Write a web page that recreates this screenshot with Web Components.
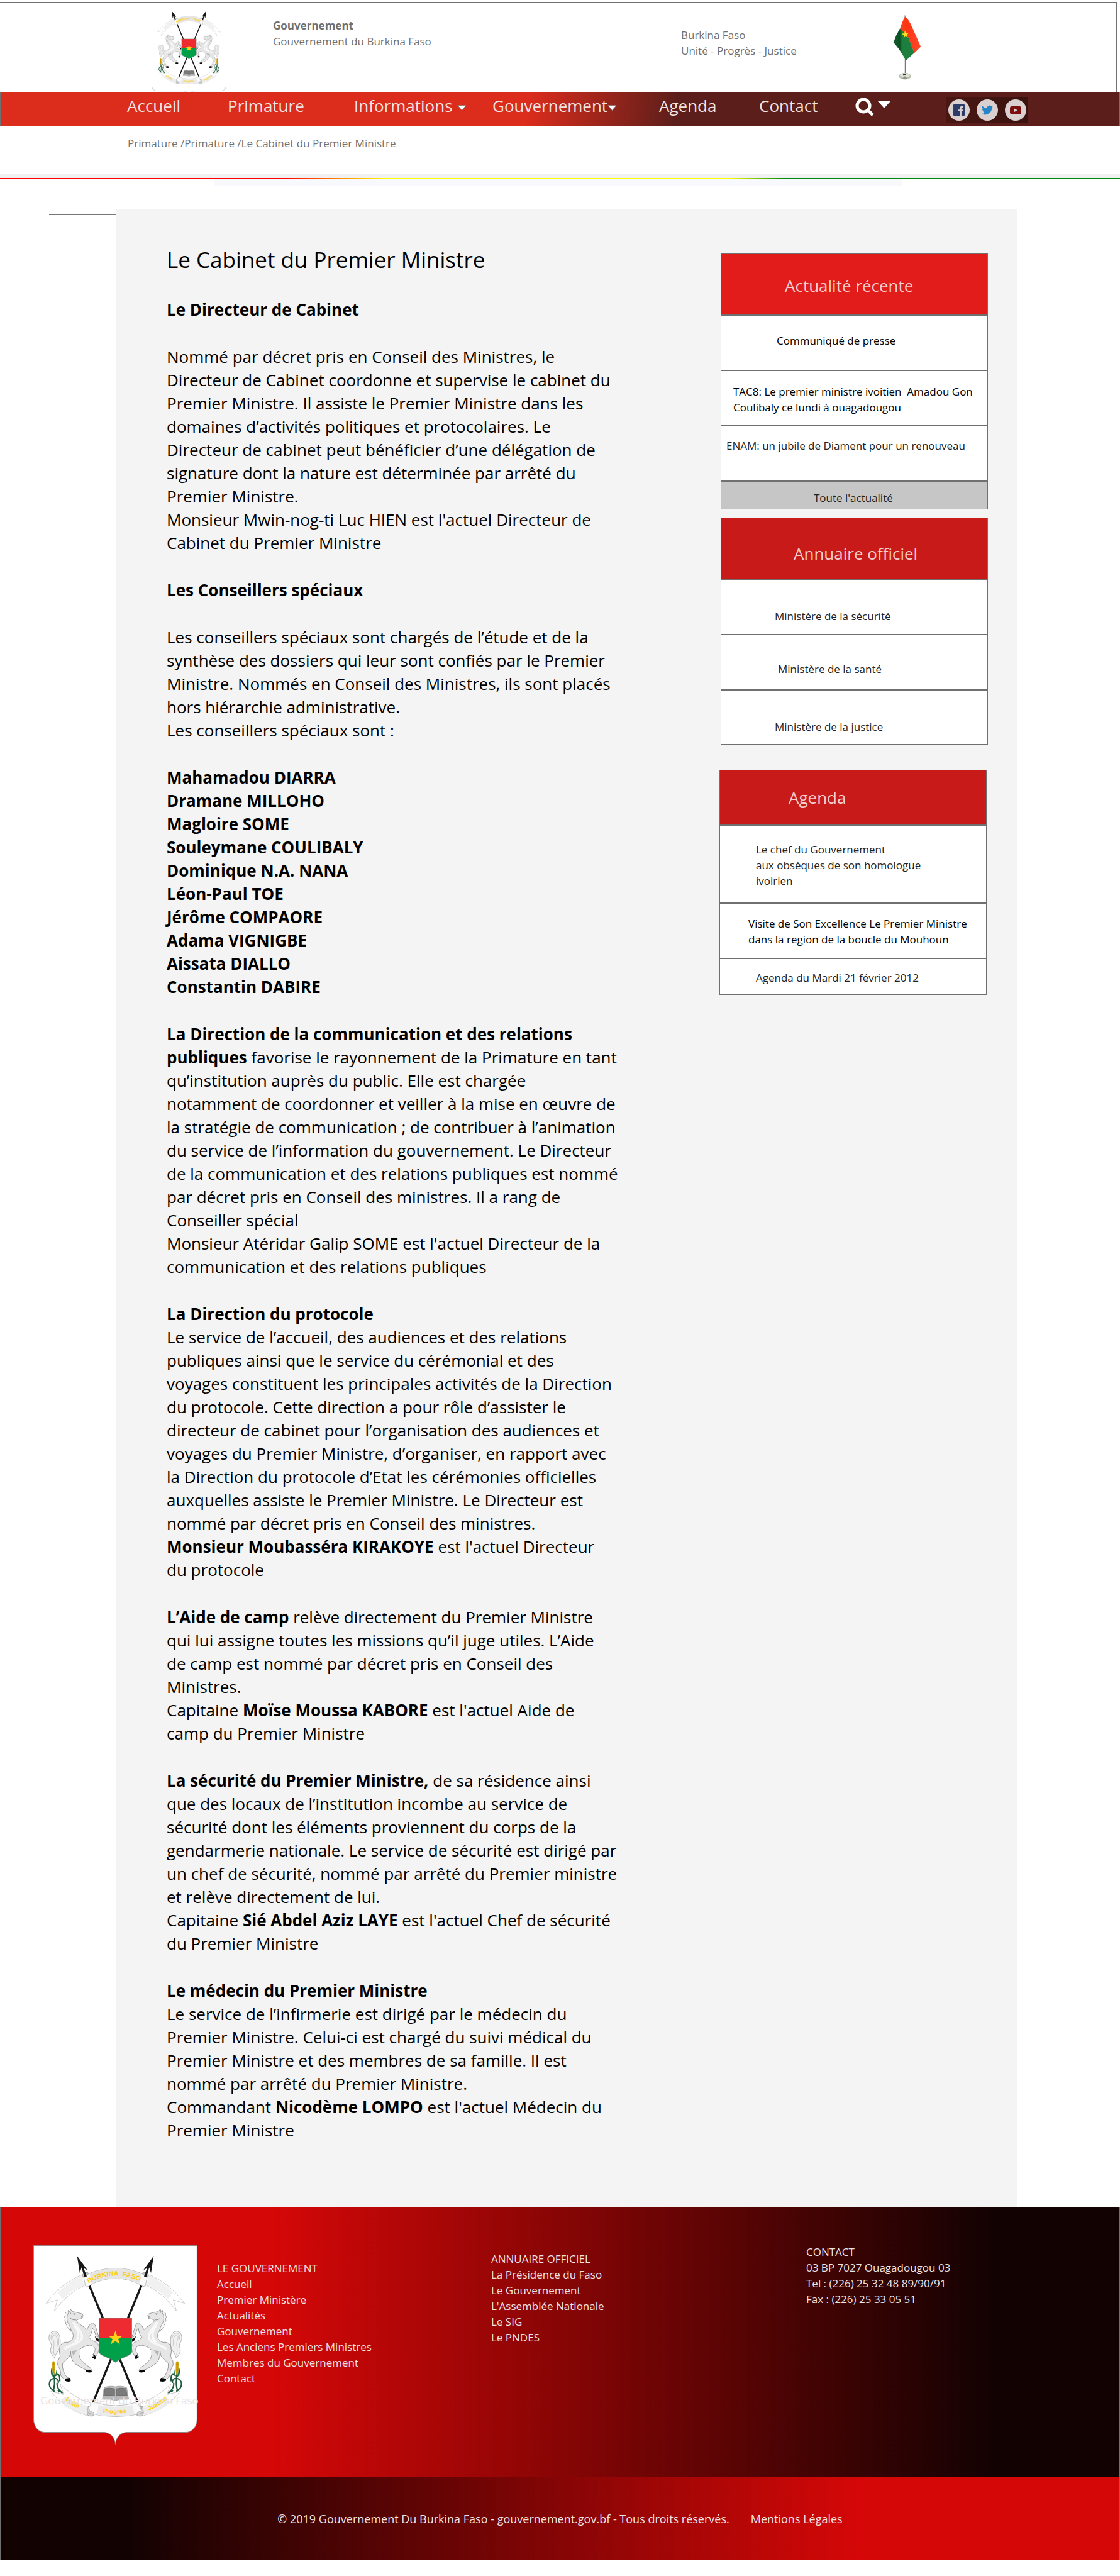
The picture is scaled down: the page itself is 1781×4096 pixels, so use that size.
<!DOCTYPE html>
<html lang="fr">
<head>
<meta charset="utf-8">
<title>Le Cabinet du Premier Ministre</title>
<style>
  body { margin: 0; background: #fff; font-family: "Open Sans", "Noto Sans", sans-serif; font-size: 17px; line-height: 25px; color: #000; }
</style>
</head>
<body>
<gov-page>
  <cabinet-article slot="article"></cabinet-article>

  <side-card slot="aside" style="--head-h:96px;--head-x:102px;--head-y:33px;--head-bg:#e11c1a">
    <span slot="title">Actualité récente</span>
    <side-row style="--h:86px;--x:88px;--y:27px">Communiqué de presse</side-row>
    <side-row style="--h:86px;--x:19px;--y:20px">TAC8: Le premier ministre ivoitien &nbsp;Amadou Gon<br>Coulibaly ce lundi à ouagadougou</side-row>
    <side-row style="--h:86px;--x:8px;--y:18px;--ink:#222">ENAM: un jubile de Diament pour un renouveau</side-row>
    <side-row style="--h:43px;--x:147px;--y:13px;--ink:#222;--bg:#c6c6c6">Toute l'actualité</side-row>
  </side-card>

  <side-card slot="aside" style="--head-h:96px;--head-x:116px;--head-y:39px;--gap:13px">
    <span slot="title">Annuaire officiel</span>
    <side-row style="--h:86px;--x:85px;--y:45px;--ink:#222">Ministère de la sécurité</side-row>
    <side-row style="--h:86px;--x:90px;--y:41px;--ink:#222">Ministère de la santé</side-row>
    <side-row style="--h:85px;--x:85px;--y:45px;--ink:#222">Ministère de la justice</side-row>
  </side-card>

  <side-card slot="aside" style="--head-h:86px;--head-x:110px;--head-y:26px;--gap:40px;--shift:2px">
    <span slot="title">Agenda</span>
    <side-row style="--h:122px;--x:57px;--y:25px;--ink:#222">Le chef du Gouvernement<br>aux obsèques de son homologue<br>ivoirien</side-row>
    <side-row style="--h:86px;--x:45px;--y:19px">Visite de Son Excellence Le Premier Ministre<br>dans la region de la boucle du Mouhoun</side-row>
    <side-row style="--h:56px;--x:57px;--y:17px;--ink:#222">Agenda du Mardi 21 février 2012</side-row>
  </side-card>
</gov-page>

<script>
function define(name, markup) {
  const template = document.createElement('template');
  template.innerHTML = markup;
  customElements.define(name, class extends HTMLElement {
    constructor() {
      super();
      this.attachShadow({ mode: 'open' }).append(template.content.cloneNode(true));
    }
  });
}

/* Left half of the coat of arms supporters; the right half is its mirror. */
const supporter = `
  <path d="M187 575C192 530 185 500 160 498C138 498 128 515 131 540C134 556 146 562 143 578C134 592 136 612 160 636C163 610 182 605 187 575Z" fill="#f1f1f1" stroke="#999" stroke-width="2.5"/>
  <path d="M180 570C184 535 178 508 158 508C142 510 138 525 143 540M172 580C178 545 172 518 157 518C147 522 148 532 154 545C162 570 148 590 158 620" fill="none" stroke="#aaa" stroke-width="2"/>
  <path d="M232 395L230 390Q236 396 238 398L241 385L252 398Q268 400 280 403L300 409Q308 416 305 422L296 424L305 428Q302 436 290 435Q278 437 272 442C280 462 312 474 325 491Q333 470 348 457Q362 452 369 470L378 500L388 530L374 524L360 490L354 482Q350 515 335 530Q350 548 374 556Q390 566 388 590Q384 612 372 626L356 618Q370 605 368 588Q364 574 340 570Q305 574 285 596Q282 620 291 640Q312 668 340 684L352 700L322 697Q300 688 262 664Q248 648 244 628L242 603Q240 625 232 634Q212 650 201 664Q197 680 206 705Q214 730 226 736L240 742L214 745Q190 736 190 716Q192 700 175 672Q172 650 188 628Q180 600 188 572Q200 552 228 555Q250 548 254 530C262 505 232 480 218 455Q205 420 232 395Z" fill="#e6e6e6" stroke="#909090" stroke-width="3"/>
  <path d="M255 450C270 480 300 495 300 530C298 560 240 565 210 590M262 470C290 500 285 540 262 555" fill="none" stroke="#f8f8f8" stroke-width="12"/>
  <path d="M246 600L276 596Q266 606 256 624Z" fill="#b5b5b5"/>
  <path d="M222 400Q210 404 214 416Q206 426 214 434Q208 446 217 452Q212 462 222 468Q220 478 230 482Q230 492 238 492L244 500Q244 478 232 462Q214 434 232 400Z" fill="#f5f5f5" stroke="#888" stroke-width="2.5"/>
  <path d="M238 398L243 408M238 428Q248 442 270 440M254 409L266 408L262 413Z" fill="none" stroke="#777" stroke-width="2.5"/>
  <path d="M366 524Q376 534 386 538V553Q374 550 371 538Z M358 616L372 628Q374 640 366 642L353 634L352 626L359 629Z M322 697L344 696Q354 704 350 709Q334 713 320 707Z M212 742L236 738Q246 748 241 756Q224 760 211 752Z" fill="#080808"/>
  <path d="M150 806Q165 780 155 716M158 800Q134 800 132 770Q134 744 158 740Q182 742 178 764M162 728Q188 704 186 756M146 690Q138 720 156 732M172 764Q168 790 200 818M156 800V814M176 800L184 812" fill="none" stroke="#1e5a3c" stroke-width="7"/>
  <path d="M147 660Q154 644 161 660L162 700Q158 722 156 726Q150 716 148 700Z" fill="#d9a90c"/>
  <path d="M151 656V712M156 656V716M148 668H161M148 682H161M148 696H161" stroke="#a87c06" stroke-width="1.5"/>
  <path d="M145 686L152 726L158 740L142 722ZM172 682L164 722L156 738L172 716Z" fill="#2d7a4f"/>
  <path d="M330 198Q210 232 116 355L174 337L158 395Q225 300 322 258Z" fill="#fff" stroke="#bbb" stroke-width="2.5"/>
  <path d="M302 209Q235 238 176 300L202 332Q250 285 310 262Z" fill="#f1f1f1"/>
  <path d="M330 196Q300 196 302 216L318 228L336 206Z" fill="#c4c4c4" stroke="#999" stroke-width="2"/>
  <path d="M140 808Q205 900 335 935L345 868Q255 840 186 768L207 824Z" fill="#fff" stroke="#bbb" stroke-width="2.5"/>
  <path d="M212 832Q262 868 330 882L326 930Q250 912 188 862Z" fill="#eee"/>
  <path d="M334 885Q360 880 362 930Q350 940 332 932Q322 915 334 910Z" fill="#d2d2d2" stroke="#999" stroke-width="2.5"/>`;
const spear = `<path d="M316 210L586 862" stroke="#161616" stroke-width="11"/>`;
const spearHead = `<path d="M275 111L328 184L309 174L325 216L313 222L298 170L289 199Z" fill="#161616"/>`;

define('faso-emblem', `
<style>
  :host { display: block; }
  svg { display: block; width: 100%; height: auto; }
  text { font-family: "Liberation Sans", sans-serif; font-weight: bold; fill: #fbcf17; }
</style>
<svg viewBox="50 56 844 1026" role="img" aria-label="Armoiries du Burkina Faso">
  <defs>
    <path id="arc" d="M334 252Q405 213 472 213Q545 213 616 252"/>
    <path id="mid" d="M408 918Q472 926 540 916"/>
    <path id="left" d="M214 852Q250 884 300 902"/>
    <path id="right" d="M644 906Q696 884 736 850"/>
    <clipPath id="shield"><path d="M388 431H556V606Q553 618 528 627Q498 638 472 658Q446 638 416 627Q391 618 388 606Z"/></clipPath>
  </defs>
  <path d="M51.500 58H892V950C892 994 862 1018 835 1018H530C492 1021 474 1050 472 1080C470 1050 452 1021 414 1018H108C81 1018 51.500 994 51.500 950Z" fill="#fff" stroke="#868686" stroke-width="3"/>
  <g>${supporter}</g>
  <g transform="translate(944 0) scale(-1 1)">${supporter}</g>
  ${spear}<g transform="translate(944 0) scale(-1 1)">${spear}</g>
  <path d="M308 216Q385 174 472 174Q560 174 636 216L626 266Q615 272 605 262Q545 227 472 227Q400 227 342 262Q330 274 318 266Z" fill="#fbfbfb" stroke="#aaa" stroke-width="2.5"/>
  <path d="M340 203Q405 175 472 175Q540 175 604 203L594 256Q540 226 472 226Q405 226 350 256Z" fill="#e6e6e6"/>
  ${spearHead}<g transform="translate(944 0) scale(-1 1)">${spearHead}</g>
  <path d="M405 848L414 788Q445 776 472 784Q500 776 530 788L540 848Q500 846 472 854Q440 846 405 848Z" fill="#b9b9b9" stroke="#999" stroke-width="2.500"/>
  <path d="M418 793Q445 788 468 794V832Q445 824 411 831ZM526 793Q500 788 476 794V832Q500 824 533 831Z" fill="#7b7b7b" stroke="#555" stroke-width="2"/>
  <path d="M358 862Q472 900 586 862L612 920Q472 955 338 920Q328 908 334 890Z" fill="#fafafa" stroke="#aaa" stroke-width="2.5"/>
  <path d="M385 878Q472 894 560 878L570 926Q472 946 378 928Z" fill="#ebebeb"/>
  <path d="M332 882L328 912Q330 922 362 926Q360 912 340 908ZM612 882L616 912Q614 922 582 926Q584 912 604 908Z" fill="#d6d6d6" stroke="#999" stroke-width="2"/>
  <g clip-path="url(#shield)">
    <path d="M388 431H556V534H388Z" fill="#ef2b32"/><path d="M388 534H556V660H388Z" fill="#00a04a"/>
  </g>
  <path d="M388 431H556V606Q553 618 528 627Q498 638 472 658Q446 638 416 627Q391 618 388 606Z" fill="none" stroke="#777" stroke-width="3"/>
  <path d="M472 495L481 522H509L487 539L495 565L472 549L449 565L457 539L435 522H463Z" fill="#fcd116"/>
  <text font-size="35"><textPath href="#arc">BURKINA &#160;FASO</textPath></text>
  <text font-size="32"><textPath href="#mid">Progrès</textPath></text>
  <text font-size="32"><textPath href="#left">Unité</textPath></text>
  <text font-size="32"><textPath href="#right">Justice</textPath></text>
</svg>`);

define('desk-flag', `
<style>:host { display: block; } svg { display: block; width: 45px; height: 103px; }</style>
<svg viewBox="270 74 144 332" role="img" aria-label="Drapeau du Burkina Faso">
  <defs>
    <linearGradient id="g"><stop offset="0" stop-color="#14602a"/><stop offset=".3" stop-color="#0c4f24"/><stop offset=".42" stop-color="#1d7f3e"/><stop offset="1" stop-color="#1d7f3e"/></linearGradient>
    <linearGradient id="r"><stop offset="0" stop-color="#f24422"/><stop offset=".3" stop-color="#ff3411"/><stop offset="1" stop-color="#ff4a2c"/></linearGradient>
  </defs>
  <path d="M329 76H333V90H329ZM330 300H334V374H330Z" fill="#777"/>
  <ellipse cx="331" cy="387" rx="32" ry="17" fill="#b9bdac"/>
  <ellipse cx="331" cy="383" rx="26" ry="11" fill="#dfe2d6"/>
  <path d="M321 376H324V384H321ZM327 376H337V383H327Z" fill="#333"/><path d="M318 400L328 388H334L342 400Z" fill="#8f9482"/>
  <path d="M331 82Q350 94 368 136L412 236L379 268L346 185L305 145Q314 112 331 82Z" fill="url(#r)"/>
  <path d="M305 143L346 183L379 267L335 308Q310 255 272 214Q284 176 305 143Z" fill="url(#g)"/>
  <path d="M330 152L336 166L349 166L340 176L346 189L333 183L324 192L325 177L313 169L328 168Z" fill="#f4e51c"/>
</svg>`);

define('gov-header', `
<style>
  :host { display: grid; grid-template-columns: 241fr 193fr 649fr 337fr 355fr; align-items: start; height: 142px; margin: 3px 5px 0 0; border-top: 1px solid #707070; border-right: 1px solid #707070; color: #707070; }
  faso-emblem { grid-column: 2; width: 119px; height: 137px; margin-top: 5px; overflow: hidden; }
  .name { margin-top: 24px; }
  .motto { margin-top: 39px; }
  desk-flag { margin-top: 20px; }
  p { margin: 0; white-space: nowrap; }
</style>
<faso-emblem></faso-emblem>
<div class="name"><p><b>Gouvernement</b></p><p>Gouvernement du Burkina Faso</p></div>
<div class="motto"><p>Burkina Faso</p><p>Unité - Progrès - Justice</p></div>
<desk-flag></desk-flag>`);

define('menu-caret', `
<style>:host { display: block; } svg { display: block; }</style>
<svg width="15" height="9" viewBox="0 0 15 9"><path d="M1 .8H14L7.500 8.500Z" fill="#fff" stroke="#8a8080" stroke-width="1"/></svg>`);

define('social-link', `
<style>
  :host { display: block; }
  a { display: flex; align-items: center; justify-content: center; width: 34px; height: 34px; border-radius: 50%; background: #dad0d0; }
  svg { display: none; width: 18px; height: 18px; }
  :host([kind="facebook"]) .facebook, :host([kind="twitter"]) .twitter, :host([kind="youtube"]) .youtube { display: block; }
</style>
<a href="#">
  <svg class="facebook" viewBox="0 0 18 18"><rect width="18" height="18" rx="1" fill="#2b3c68"/><path d="M10 18V11H7.500V8.200H10V6.500C10 4 11.500 2.800 13.600 2.800H15.600V5.400H14.200C13.200 5.400 12.900 5.900 12.900 6.800V8.200H15.500L15.100 11H12.900V18Z" fill="#dad0d0"/></svg>
  <svg class="twitter" viewBox="0 0 24 24"><path fill="#2585c6" d="M24 4.600a10 10 0 0 1-2.800.8 5 5 0 0 0 2.200-2.700 10 10 0 0 1-3.100 1.200 4.900 4.900 0 0 0-8.400 4.500A14 14 0 0 1 1.700 3.200a4.900 4.900 0 0 0 1.500 6.500 4.900 4.900 0 0 1-2.200-.6 4.900 4.900 0 0 0 3.900 4.900 5 5 0 0 1-2.200.1 4.900 4.900 0 0 0 4.600 3.400A9.900 9.900 0 0 1 0 19.500 14 14 0 0 0 21.500 7.100 10 10 0 0 0 24 4.600z"/></svg>
  <svg class="youtube" viewBox="0 0 18 18"><rect y="3" width="18" height="12.500" rx="3" fill="#7a0f0e"/><path d="M7 6.500L12 9.200L7 12Z" fill="#dad0d0"/></svg>
</a>`);

define('gov-nav', `
<style>
  :host { display: block; }
  nav { box-sizing: border-box; display: grid; grid-template-columns: 201fr 160fr 201fr 220fr 265fr 159fr 148fr 150fr 275fr; align-items: start; height: 55px; border: 1px solid #707070; background: linear-gradient(97deg, #dc2c1c 47%, #5b1e1a 60.500%); font-size: 26px; line-height: 37px; }
  a.item { display: flex; align-items: center; margin-top: 3px; color: #f0e4e3; text-decoration: none; white-space: nowrap; }
  a.item menu-caret { margin-top: 6px; }
  .spaced { gap: 7px; }
  a:first-child { grid-column: 2; }
  button { display: flex; align-items: flex-start; gap: 6px; width: 72px; height: 53px; margin: 0; margin-top: -1px; padding: 10px 5px 0; border: 0; background: #5b1e1a; }
  .social { display: flex; align-items: center; justify-content: center; gap: 11px; width: 130px; height: 42px; margin-top: 7px; background: linear-gradient(90deg, #4a1713, #3a120f); }
</style>
<nav aria-label="Menu principal">
  <a class="item" href="#">Accueil</a>
  <a class="item" href="#">Primature</a>
  <a class="item spaced" href="#">Informations<menu-caret></menu-caret></a>
  <a class="item" href="#">Gouvernement<menu-caret></menu-caret></a>
  <a class="item" href="#">Agenda</a>
  <a class="item" href="#">Contact</a>
  <button type="button" aria-label="Rechercher">
    <svg width="30" height="29" viewBox="0 0 30 29"><ellipse cx="13" cy="12" rx="10" ry="10" fill="none" stroke="#fff" stroke-width="5"/><path d="M20 19L28 27" stroke="#fff" stroke-width="5"/></svg>
    <svg width="20" height="16" viewBox="0 0 20 16"><path d="M0 5H20L10 16Z" fill="#fff"/></svg>
  </button>
  <div class="social">
    <social-link kind="facebook"></social-link><social-link kind="twitter"></social-link><social-link kind="youtube"></social-link>
  </div>
</nav>`);

define('gov-breadcrumb', `
<style>
  :host { display: block; color: #707070; }
  .trail { padding: 14px 203px 36px; }
  a { color: inherit; text-decoration: none; }
  .band { height: 7px; background: #f1f1f1; }
  .tricolor { height: 2px; background: linear-gradient(90deg, #f00 25.500%, #ff0 34.600%, #ff0 65%, #008a0e 70%); }
  .pale { height: 11px; margin: 0 346px 36px 340px; background: #f7f9fc; }
</style>
<div class="trail"><a href="#">Primature</a> /<a href="#">Primature</a> /Le Cabinet du Premier Ministre</div>
<div class="band"></div><div class="tricolor"></div><div class="pale"></div>`);

define('side-row', `
<style>
  :host { box-sizing: border-box; display: block; min-height: calc(var(--h) + 2px); padding: var(--y) 0 0 var(--x); border-top: 2px solid #707070; background: var(--bg, #fff); }
  a { color: var(--ink, #000); text-decoration: none; white-space: nowrap; }
</style>
<a href="#"><slot></slot></a>`);

define('side-card', `
<style>
  :host { display: block; margin: var(--gap, 0) var(--shift, 0) 0 calc(0px - var(--shift, 0px)); border: 1px solid #707070; }
  h2 { box-sizing: border-box; height: var(--head-h); margin: 0; padding: calc(var(--head-y) - 1px) 0 0 calc(var(--head-x) - 1px); background: var(--head-bg, #c81a19); color: #f4cfce; font-size: 26px; line-height: 37px; font-weight: 400; }
</style>
<h2><slot name="title"></slot></h2><slot></slot>`);

define('cabinet-article', `
<style>
  :host { display: block; font-size: 26px; line-height: 37px; white-space: nowrap; }
  h1 { margin: 0 0 37px; font-size: 35px; line-height: 48px; font-weight: 400; }
  h2 { margin: 0 0 38px; font-size: inherit; line-height: inherit; }
  p { margin: 0 0 38px; }
  p:last-child { margin: 0; }
</style>
<h1>Le Cabinet du Premier Ministre</h1>
<h2>Le Directeur de Cabinet</h2>
<p>Nommé par décret pris en Conseil des Ministres, le<br>Directeur de Cabinet coordonne et supervise le cabinet du<br>Premier Ministre. Il assiste le Premier Ministre dans les<br>domaines d’activités politiques et protocolaires. Le<br>Directeur de cabinet peut bénéficier d’une délégation de<br>signature dont la nature est déterminée par arrêté du<br>Premier Ministre.<br>Monsieur Mwin-nog-ti Luc HIEN est l'actuel Directeur de<br>Cabinet du Premier Ministre</p>
<h2>Les Conseillers spéciaux</h2>
<p>Les conseillers spéciaux sont chargés de l’étude et de la<br>synthèse des dossiers qui leur sont confiés par le Premier<br>Ministre. Nommés en Conseil des Ministres, ils sont placés<br>hors hiérarchie administrative.<br>Les conseillers spéciaux sont :</p>
<p><b>Mahamadou DIARRA<br>Dramane MILLOHO<br>Magloire SOME<br>Souleymane COULIBALY<br>Dominique N.A. NANA<br>Léon-Paul TOE<br>Jérôme COMPAORE<br>Adama VIGNIGBE<br>Aissata DIALLO<br>Constantin DABIRE</b></p>
<p><b>La Direction de la communication et des relations<br>publiques</b> favorise le rayonnement de la Primature en tant<br>qu’institution auprès du public. Elle est chargée<br>notamment de coordonner et veiller à la mise en œuvre de<br>la stratégie de communication ; de contribuer à l’animation<br>du service de l’information du gouvernement. Le Directeur<br>de la communication et des relations publiques est nommé<br>par décret pris en Conseil des ministres. Il a rang de<br>Conseiller spécial<br>Monsieur Atéridar Galip SOME est l'actuel Directeur de la<br>communication et des relations publiques</p>
<p><b>La Direction du protocole</b><br>Le service de l’accueil, des audiences et des relations<br>publiques ainsi que le service du cérémonial et des<br>voyages constituent les principales activités de la Direction<br>du protocole. Cette direction a pour rôle d’assister le<br>directeur de cabinet pour l’organisation des audiences et<br>voyages du Premier Ministre, d’organiser, en rapport avec<br>la Direction du protocole d’Etat les cérémonies officielles<br>auxquelles assiste le Premier Ministre. Le Directeur est<br>nommé par décret pris en Conseil des ministres.<br><b>Monsieur Moubasséra KIRAKOYE</b> est l'actuel Directeur<br>du protocole</p>
<p><b>L’Aide de camp</b> relève directement du Premier Ministre<br>qui lui assigne toutes les missions qu’il juge utiles. L’Aide<br>de camp est nommé par décret pris en Conseil des<br>Ministres.<br>Capitaine <b>Moïse Moussa KABORE</b> est l'actuel Aide de<br>camp du Premier Ministre</p>
<p><b>La sécurité du Premier Ministre,</b> de sa résidence ainsi<br>que des locaux de l’institution incombe au service de<br>sécurité dont les éléments proviennent du corps de la<br>gendarmerie nationale. Le service de sécurité est dirigé par<br>un chef de sécurité, nommé par arrêté du Premier ministre<br>et relève directement de lui.<br>Capitaine <b>Sié Abdel Aziz LAYE</b> est l'actuel Chef de sécurité<br>du Premier Ministre</p>
<p><b>Le médecin du Premier Ministre</b><br>Le service de l’infirmerie est dirigé par le médecin du<br>Premier Ministre. Celui-ci est chargé du suivi médical du<br>Premier Ministre et des membres de sa famille. Il est<br>nommé par arrêté du Premier Ministre.<br>Commandant <b>Nicodème LOMPO</b> est l'actuel Médecin du<br>Premier Ministre</p>`);

define('gov-footer', `
<style>
  :host { display: block; color: #eee3e3; }
  .top { box-sizing: border-box; display: grid; grid-template-columns: 52fr 292fr 436fr 501fr 498fr; align-items: start; min-height: 430px; border: 1px solid #707070; background: linear-gradient(90deg, #d60707 24%, #120202 89%); }
  .crest { grid-column: 2; position: relative; width: 261px; margin-top: 60px; }
  .crest p { position: absolute; left: 11px; top: 234px; margin: 0; white-space: nowrap; color: #e6e0e0; }
  .a { margin-top: 84px; } .b { margin-top: 69px; } .c { margin-top: 58px; }
  h3, p, ul { margin: 0; padding: 0; font-size: inherit; font-weight: 400; list-style: none; }
  a { color: inherit; text-decoration: none; }
  .bar { box-sizing: border-box; display: flex; justify-content: center; gap: 34px; height: 132px; padding-top: 54px; border: 1px solid #707070; border-top: 0; background: linear-gradient(90deg, #120202 11%, #d60707 77%); font-size: 18px; }
</style>
<div class="top">
  <div class="crest"><faso-emblem></faso-emblem><p>Gouvernement du Burkina Faso</p></div>
  <div class="a"><h3>LE GOUVERNEMENT</h3>
    <ul><li><a href="#">Accueil</a></li><li><a href="#">Premier Ministère</a></li><li><a href="#">Actualités</a></li><li><a href="#">Gouvernement</a></li><li><a href="#">Les Anciens Premiers Ministres</a></li><li><a href="#">Membres du Gouvernement</a></li><li><a href="#">Contact</a></li></ul></div>
  <div class="b"><h3>ANNUAIRE OFFICIEL</h3>
    <ul><li><a href="#">La Présidence du Faso</a></li><li><a href="#">Le Gouvernement</a></li><li><a href="#">L'Assemblée Nationale</a></li><li><a href="#">Le SIG</a></li><li><a href="#">Le PNDES</a></li></ul></div>
  <div class="c"><h3>CONTACT</h3><p>03 BP 7027 Ouagadougou 03</p><p>Tel : (226) 25 32 48 89/90/91</p><p>Fax : (226) 25 33 05 51</p></div>
</div>
<div class="bar"><span>© 2019 Gouvernement Du Burkina Faso - gouvernement.gov.bf - Tous droits réservés.</span><a href="#">Mentions Légales</a></div>`);

define('gov-page', `
<style>
  :host { display: block; padding-bottom: 25px; }
  .body { display: grid; grid-template-columns: 184px 1fr 163px; }
  hr { height: 1px; margin: 0; border: 0; background: #777; }
  .left { margin: 9px 0 0 78px; }
  .right { margin: 11px 5px 0 0; }
  main { display: flex; justify-content: space-between; padding: 57px 47px 103px 81px; background: #f4f4f4; }
  aside { width: 425px; margin-top: 14px; }
</style>
<gov-header></gov-header>
<gov-nav></gov-nav>
<gov-breadcrumb></gov-breadcrumb>
<div class="body">
  <div><hr class="left"></div>
  <main><slot name="article"></slot><aside><slot name="aside"></slot></aside></main>
  <div><hr class="right"></div>
</div>
<gov-footer></gov-footer>`);
</script>
</body>
</html>
